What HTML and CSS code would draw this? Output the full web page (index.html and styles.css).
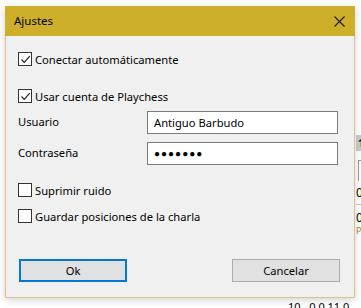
FILE: index.html
```html
<!DOCTYPE html>
<html lang="es">
<head>
<meta charset="utf-8">
<link rel="stylesheet" href="styles.css">
<title>Ajustes</title>
</head>
<body>
<div class="backdrop">
  <div class="bg-head">1</div>
  <div class="bg-cell"></div>
  <div class="bg-num n1">0</div>
  <div class="bg-line"></div>
  <div class="bg-num n2">0</div>
  <div class="bg-p">P</div>
  <div class="bg-foot">10&nbsp;&nbsp;&nbsp;0.0 11.0</div>
</div>
<div class="dialog">
  <div class="titlebar">
    <span class="title">Ajustes</span>
    <svg class="close" width="11" height="11" viewBox="0 0 11 11"><path d="M0.5 0.5 L10.5 10.5 M10.5 0.5 L0.5 10.5" stroke="#1a1a1a" stroke-width="1.1" fill="none"/></svg>
  </div>
  <div class="content">
    <label class="check r1"><span class="box checked"><svg width="11" height="11" viewBox="0 0 11 11"><path d="M1.5 5.5 L4.2 8.3 L9.8 2.2" stroke="#222" stroke-width="1.2" fill="none"/></svg></span><span>Conectar automáticamente</span></label>
    <label class="check r2"><span class="box checked"><svg width="11" height="11" viewBox="0 0 11 11"><path d="M1.5 5.5 L4.2 8.3 L9.8 2.2" stroke="#222" stroke-width="1.2" fill="none"/></svg></span><span>Usar cuenta de Playchess</span></label>
    <div class="field r3"><span class="lbl">Usuario</span><div class="input">Antiguo Barbudo</div></div>
    <div class="field r4"><span class="lbl">Contraseña</span><div class="input pw">●●●●●●●</div></div>
    <label class="check r5"><span class="box"></span><span>Suprimir ruido</span></label>
    <label class="check r6"><span class="box"></span><span>Guardar posiciones de la charla</span></label>
    <div class="buttons">
      <div class="btn default">Ok</div>
      <div class="btn">Cancelar</div>
    </div>
  </div>
</div>
</body>
</html>
```
FILE: styles.css
```css
html, body {
  margin: 0;
  padding: 0;
  background: #ffffff;
  width: 361px;
  height: 308px;
  overflow: hidden;
  font-family: "Noto Sans", "Open Sans", sans-serif;
  font-size: 11.2px;
  color: #000;
}
body { position: relative; }

.backdrop {
  position: absolute;
  left: 0; top: 0;
  width: 361px; height: 308px;
}
.bg-head {
  position: absolute;
  left: 356px; top: 135px;
  width: 10px; height: 16px;
  background: #c9cdd3;
  font-size: 11px; font-weight: bold;
  line-height: 16px;
  padding-left: 2px;
}
.bg-cell {
  position: absolute;
  left: 358px; top: 160px;
  width: 6px; height: 20px;
  border-left: 1px solid #9a9a9a;
  border-top: 1px solid #9a9a9a;
}
.bg-num {
  position: absolute;
  left: 356px;
  font-size: 12px;
  line-height: 12px;
}
.bg-num.n1 { top: 187px; }
.bg-num.n2 { top: 212px; }
.bg-line {
  position: absolute;
  left: 356px; top: 204px;
  width: 6px; height: 1px;
  background: #c8c8c8;
}
.bg-p {
  position: absolute;
  left: 356px; top: 226px;
  font-size: 9px; line-height: 10px;
  color: #b08a3a;
}
.bg-foot {
  position: absolute;
  left: 288px; top: 301px;
  font-size: 11px;
  line-height: 12px;
  white-space: nowrap;
}

.dialog {
  position: absolute;
  left: 5px; top: 6px;
  width: 348px;
  border: 1px solid #e6bd8c;
  background: #f0f0f0;
  box-shadow: 0 2px 8px rgba(0,0,0,0.18);
}
.titlebar {
  height: 30px;
  margin: -1px -1px 0 -1px;
  background: #ceaf2a;
  display: flex;
  align-items: center;
  justify-content: space-between;
  padding: 0 10px 0 9px;
}
.title { font-size: 11.5px; margin-top: -1px; }
.close { display: block; }

.content {
  display: flex;
  flex-direction: column;
  padding: 16px 14px 15px 12px;
}
.check {
  display: flex;
  align-items: center;
  height: 14px;
  gap: 3px;
}
.box {
  width: 12px; height: 12px;
  border: 1px solid #333;
  background: #fff;
  display: flex;
  align-items: center;
  justify-content: center;
  flex: none;
}
.box svg { display: block; }
.r2 { margin-top: 23px; }
.field {
  display: flex;
  align-items: center;
  height: 23px;
  margin-right: 2px;
}
.r3 { margin-top: 8px; }
.r4 { margin-top: 8px; }
.lbl { width: 129px; flex: none; margin-top: -2px; }
.input {
  flex: 1;
  height: 21px;
  border: 1px solid #7a7a7a;
  background: #fff;
  box-sizing: content-box;
  padding-left: 6px;
  line-height: 21px;
}
.input.pw {
  font-size: 10px;
  letter-spacing: 1px;
}
.r5 { margin-top: 18px; }
.r6 { margin-top: 12px; }
.buttons {
  display: flex;
  justify-content: space-between;
  margin-top: 36px;
  padding-left: 1px;
}
.btn {
  width: 106px;
  height: 21px;
  border: 1px solid #adadad;
  background: #e1e1e1;
  display: flex;
  align-items: center;
  justify-content: center;
}
.btn.default {
  width: 104px;
  height: 19px;
  border: 2px solid #0078d7;
}
```
